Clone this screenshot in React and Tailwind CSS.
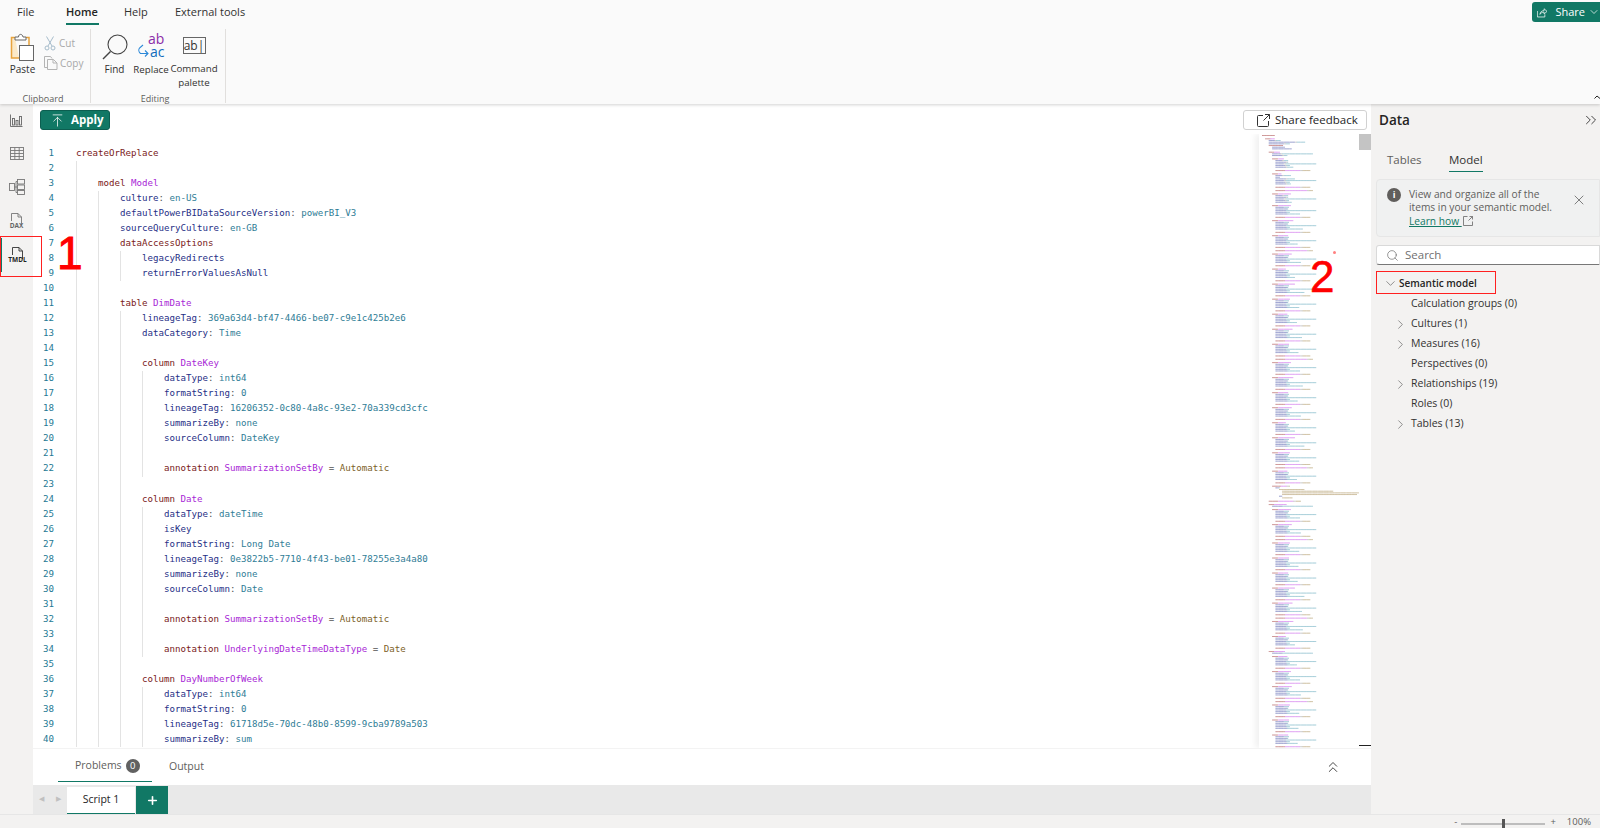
import React from "react";
import { ChevronRight, ChevronDown, ChevronsRight, ChevronsUp, X, Search, ArrowUpToLine, Plus } from "lucide-react";

const K = "text-[#7a1a1a]", N = "text-[#a81fd6]", P = "text-[#1f2f86]", V = "text-[#2f7d96]", G = "text-[#555555]", A = "text-[#7d5f28]";

const prop = (i, k, v) => [i, [[k, P], [": ", G], [v, V]]];
const kw = (i, k, n) => [i, [[k + " ", K], [n, N]]];
const ann = (i, n, v) => [i, [["annotation ", K], [n, N], [" = ", G], [v, A]]];
const blank = [0, []];

const CODE = [
  [0, [["createOrReplace", K]]],
  blank,
  kw(4, "model", "Model"),
  prop(8, "culture", "en-US"),
  prop(8, "defaultPowerBIDataSourceVersion", "powerBI_V3"),
  prop(8, "sourceQueryCulture", "en-GB"),
  [8, [["dataAccessOptions", K]]],
  [12, [["legacyRedirects", P]]],
  [12, [["returnErrorValuesAsNull", P]]],
  blank,
  kw(8, "table", "DimDate"),
  prop(12, "lineageTag", "369a63d4-bf47-4466-be07-c9e1c425b2e6"),
  prop(12, "dataCategory", "Time"),
  blank,
  kw(12, "column", "DateKey"),
  prop(16, "dataType", "int64"),
  prop(16, "formatString", "0"),
  prop(16, "lineageTag", "16206352-0c80-4a8c-93e2-70a339cd3cfc"),
  prop(16, "summarizeBy", "none"),
  prop(16, "sourceColumn", "DateKey"),
  blank,
  ann(16, "SummarizationSetBy", "Automatic"),
  blank,
  kw(12, "column", "Date"),
  prop(16, "dataType", "dateTime"),
  [16, [["isKey", P]]],
  prop(16, "formatString", "Long Date"),
  prop(16, "lineageTag", "0e3822b5-7710-4f43-be01-78255e3a4a80"),
  prop(16, "summarizeBy", "none"),
  prop(16, "sourceColumn", "Date"),
  blank,
  ann(16, "SummarizationSetBy", "Automatic"),
  blank,
  ann(16, "UnderlyingDateTimeDataType", "Date"),
  blank,
  kw(12, "column", "DayNumberOfWeek"),
  prop(16, "dataType", "int64"),
  prop(16, "formatString", "0"),
  prop(16, "lineageTag", "61718d5e-70dc-48b0-8599-9cba9789a503"),
  prop(16, "summarizeBy", "sum"),
];

const guideCount = (i) => {
  let j = i;
  while (j < CODE.length && CODE[j][1].length === 0) j++;
  const ind = j < CODE.length ? CODE[j][0] : 16;
  return Math.floor(ind / 4);
};
const GUIDE_X = ["left-[0px]", "left-[22px]", "left-[44px]", "left-[66px]"];

const MINI = { K: "#a33a3a", N: "#c550e8", P: "#4a55a8", V: "#58a3b8", G: "#999999", A: "#a58a50" };
const miniRows = () => {
  const rows = [];
  const push = (ind, toks) => rows.push([ind, toks]);
  const col = (n, extra) => {
    push(12, [[7, MINI.K], [n, MINI.N]]);
    push(16, [[10, MINI.P], [6, MINI.V]]);
    push(16, [[14, MINI.P], [1, MINI.V]]);
    push(16, [[12, MINI.P], [36, MINI.V]]);
    push(16, [[13, MINI.P], [4, MINI.V]]);
    push(16, [[14, MINI.P], [n, MINI.V]]);
    push(0, []);
    push(16, [[11, MINI.K], [18, MINI.N], [3, MINI.G], [9, MINI.A]]);
    if (extra) {
      push(0, []);
      push(16, [[11, MINI.K], [26, MINI.N], [3, MINI.G], [4, MINI.A]]);
    }
    push(0, []);
  };
  const table = (n) => {
    push(8, [[6, MINI.K], [n, MINI.N]]);
    push(12, [[12, MINI.P], [36, MINI.V]]);
    push(0, []);
  };
  CODE.forEach(([ind, toks]) => rows.push([ind, toks.map(([t, c]) => [t.length, c === K ? MINI.K : c === N ? MINI.N : c === P ? MINI.P : c === A ? MINI.A : c === G ? MINI.G : MINI.V])]));
  push(16, [[14, MINI.P], [5, MINI.V]]);
  push(0, []);
  const names = [15, 18, 12, 16, 9, 20, 14, 11, 17, 13];
  for (let i = 0; rows.length < 205; i++) col(names[i % names.length], i % 7 === 2);
  push(12, [[10, MINI.K], [7, MINI.N], [3, MINI.G], [1, MINI.A]]);
  push(16, [[4, MINI.P], [1, MINI.V]]);
  push(20, [[30, MINI.A]]);
  push(24, [[60, MINI.A]]);
  push(24, [[90, MINI.A]]);
  push(24, [[88, MINI.A]]);
  push(20, [[4, MINI.P]]);
  push(24, [[12, MINI.A]]);
  push(0, []);
  push(8, [[11, MINI.K], [18, MINI.N], [3, MINI.G], [6, MINI.A]]);
  push(0, []);
  for (let i = 0; rows.length < 372; i++) {
    if (i % 9 === 0) table(names[i % names.length]);
    col(names[(i * 3) % names.length], i % 5 === 1);
  }
  return rows;
};

function Minimap() {
  const rows = miniRows();
  const lines = [];
  rows.forEach(([ind, toks], r) => {
    let x = 3 + ind * 0.85;
    toks.forEach(([len, c], i) => {
      const y = 1.5 + r * 1.67;
      lines.push(
        <line key={r + "-" + i} x1={x} x2={x + len * 0.85} y1={y} y2={y} stroke={c} strokeWidth={1} strokeDasharray="0.62 0.23" opacity={0.78} />
      );
      x += len * 0.85;
    });
  });
  return (
    <svg width="100" height="614" viewBox="0 0 100 614" className="block">
      {lines}
    </svg>
  );
}

const F = { fontFamily: '"Open Sans", "Noto Sans", sans-serif' };
const IconPaste = () => (
  <svg width="25" height="29" viewBox="0 0 25 29" fill="none">
    <path d="M5 4.500H1.500V25H9" stroke="#e8a33d" strokeWidth="1.500" fill="#fbe9c8" />
    <path d="M16 4.500h3v8" stroke="#e8a33d" strokeWidth="1.500" />
    <path d="M5 7V4h3.500c0-3.500 4-3.500 4.500 0H16v3z" fill="#fff" stroke="#666" strokeWidth="1" />
    <rect x="9.500" y="12.500" width="14" height="15" fill="#fff" stroke="#666" strokeWidth="1" />
  </svg>
);
const IconCut = () => (
  <svg width="12" height="15" viewBox="0 0 12 15" fill="none" stroke="#a6bccb" strokeWidth="1">
    <path d="M2.500 0.500 8 10M9.500 0.500 4 10" />
    <circle cx="3" cy="12" r="2" />
    <circle cx="9" cy="12" r="2" />
  </svg>
);
const IconCopy = () => (
  <svg width="14" height="14" viewBox="0 0 14 14" fill="none" stroke="#b4b4b4" strokeWidth="1">
    <path d="M3.500 11.500H.5V.5h6l1.500 2" />
    <path d="M3.500 3.500h6l3.500 3.500v6.500h-9.500zM9 3.500V7h4" fill="#fafafa" />
  </svg>
);
const IconFind = () => (
  <svg width="26" height="26" viewBox="0 0 26 26" fill="none" stroke="#444" strokeWidth="1.100">
    <circle cx="15.500" cy="10.500" r="9.500" />
    <path d="M8.500 17.500 1 25" strokeWidth="1.400" />
  </svg>
);
const IconReplaceArrow = () => (
  <svg width="11" height="16" viewBox="0 0 11 16" fill="none" stroke="#2b88d8" strokeWidth="1.100">
    <path d="M5 1 1.500 4C.5 5.500.5 8 2.500 9.500L10 9.500M7 6.500l3 3-3 3" />
  </svg>
);

const RailIconReport = () => (
  <svg width="13" height="13" viewBox="0 0 13 13" fill="none" stroke="#666" strokeWidth="0.900">
    <path d="M.5.5v12h12" />
    <rect x="2.500" y="4.500" width="2" height="6.500" />
    <rect x="6" y="6.500" width="2" height="4.500" />
    <rect x="9.500" y="2.500" width="2" height="8.500" />
  </svg>
);
const RailIconTable = () => (
  <svg width="14" height="13" viewBox="0 0 14 13" fill="none" stroke="#777" strokeWidth="0.900">
    <rect x=".5" y=".5" width="13" height="12" />
    <path d="M.5 3.500h13M.5 6.500h13M.5 9.500h13M4.800 .5v12M9.200 .5v12" />
  </svg>
);
const RailIconModel = () => (
  <svg width="16" height="16" viewBox="0 0 16 16" fill="none" stroke="#777" strokeWidth="0.900">
    <rect x="8.500" y=".5" width="7" height="4.500" />
    <rect x="8.500" y="6" width="7" height="4.500" />
    <rect x="8.500" y="11.500" width="7" height="4" />
    <rect x=".5" y="4.500" width="5" height="7" />
    <path d="M5.500 8h3M7 2.500V13.500M7 2.500h1.500M7 13.500h1.500" />
  </svg>
);

const DocGlyph = ({ label, active }) => (
  <div className="relative w-[24px] h-[17px] flex flex-col items-center">
    <svg width="11" height="13" viewBox="0 0 11 13" fill="none" stroke={active ? "#333" : "#777"} strokeWidth="0.900">
      <path d="M.5 8V.5h6.500L10.500 4v8M7 .5V4h3.500" />
    </svg>
    <span className={`absolute top-[9px] text-[6.500px] leading-[7px] font-bold ${active ? "text-[#222]" : "text-[#666]"}`}>{label}</span>
  </div>
);

const TreeRow = ({ children, exp }) => (
  <div className="h-[20px] flex items-center pl-[20px] text-[10.500px] text-[#323130]">
    <span className="w-[15px] flex items-center">{exp && <ChevronRight size={15} strokeWidth={0.9} className="text-[#444] -ml-[3px]" />}</span>
    <span>{children}</span>
  </div>
);

export default function App() {
  return (
    <div className="relative w-[1600px] h-[828px] overflow-hidden flex flex-col bg-white" style={F}>
      {/* Ribbon */}
      <header className="relative z-10 h-[104px] bg-[#fafafa] shadow-[0_1px_3px_rgba(0,0,0,0.18)] shrink-0">
        <nav className="h-[29px] flex pl-[17px] text-[11px] text-[#323130]">
          <div className="w-[49px] pt-[4px]">File</div>
          <div className="w-[58px] pt-[4px] font-semibold text-[#252423]">
            <div className="w-[33px] h-[21px] border-b-2 border-[#117865]">Home</div>
          </div>
          <div className="w-[51px] pt-[4px]">Help</div>
          <div className="pt-[4px]">External tools</div>
        </nav>
        <div className="flex h-[74px] text-[#323130] text-[10px]">
          <section className="w-[91px] border-r border-[#e1dfdd] flex flex-col">
            <div className="flex-1 flex">
              <div className="w-[44px] pl-[1px] flex flex-col items-center pt-[4px]">
                <IconPaste />
                <div className="leading-[14px]">Paste</div>
              </div>
              <div className="pt-[4px] text-[#a8a8a8]">
                <div className="flex h-[20px] items-center gap-[3px]"><IconCut /><span>Cut</span></div>
                <div className="flex h-[20px] items-center gap-[2px]"><IconCopy /><span>Copy</span></div>
              </div>
            </div>
            <div className="text-center text-[9px] text-[#605e5c] h-[12px] leading-[12px] -mb-[2px] pr-[4px]">Clipboard</div>
          </section>
          <section className="w-[135px] border-r border-[#e1dfdd] flex flex-col">
            <div className="flex-1 flex">
              <div className="w-[37px] ml-[5px] flex flex-col items-center pt-[5px]">
                <IconFind />
                <div className="leading-[14px] mt-[2px]">Find</div>
              </div>
              <div className="w-[36px] flex flex-col items-center pt-[4px]">
                <div className="relative h-[29px] w-[30px]">
                  <span className="absolute left-[12px] top-[0px] text-[14px] leading-[12px] text-[#8a2da8]">ab</span>
                  <span className="absolute left-[14px] top-[13px] text-[14px] leading-[12px] text-[#0f6cbd]">ac</span>
                  <span className="absolute left-[2px] top-[11px]"><IconReplaceArrow /></span>
                </div>
                <div className="leading-[14px] mt-[1px] whitespace-nowrap text-[9.700px]">Replace</div>
              </div>
              <div className="w-[50px] flex flex-col items-center pt-[8px]">
                <div className="w-[23px] h-[17px] border border-[#666] flex items-center justify-center text-[12px] text-[#333] leading-none">ab|</div>
                <div className="leading-[14px] mt-[8px] text-center whitespace-nowrap text-[9.700px]">Command<br />palette</div>
              </div>
            </div>
            <div className="text-center text-[9px] text-[#605e5c] h-[12px] leading-[12px] -mb-[2px] pr-[6px]">Editing</div>
          </section>
        </div>
        <button className="absolute right-0 top-[2px] w-[68px] h-[20px] bg-[#117865] rounded-l-[3px] flex items-center pl-[5px] text-white text-[11px]">
          <svg width="14" height="13" viewBox="0 0 14 13" fill="none" stroke="#fff" strokeWidth="1">
            <path d="M.5 4.500v8h10V9" />
            <path d="M4 9c0-3 2.500-5 5.500-5V1.500L13.500 5l-4 3.500V6C7 6 5 7 4 9z" />
          </svg>
          <span className="ml-[8px]">Share</span>
          <ChevronDown size={12} strokeWidth={1.4} className="ml-[3px] shrink-0" />
        </button>
        <svg width="6" height="4" viewBox="0 0 6 4" fill="none" stroke="#222" strokeWidth="1" className="absolute right-0 top-[95px]"><path d="M.5 3.500 3 1l3 2.500" /></svg>
      </header>

      {/* Main */}
      <div className="flex-1 flex min-h-0">
        <aside className="w-[33px] bg-[#f3f2f1] flex flex-col items-center shrink-0 pt-[9px]">
          <div className="h-[14px] flex items-center mb-[19px]"><RailIconReport /></div>
          <div className="h-[14px] flex items-center mb-[19px]"><RailIconTable /></div>
          <div className="h-[16px] flex items-center mb-[18px]"><RailIconModel /></div>
          <div className="h-[17px] flex items-center mb-[17px]"><DocGlyph label="DAX" /></div>
          <div className="h-[34px] w-full flex items-center justify-center border-l-2 border-[#117865] bg-[#f3f2f1] -mt-[9px]"><DocGlyph label="TMDL" active /></div>
        </aside>

        <main className="w-[1338px] flex flex-col min-w-0">
          <div className="h-[30px] bg-white flex items-center justify-between pl-[7px] pr-[4px] pt-[2px] shrink-0">
            <button className="w-[70px] h-[20px] rounded-[3px] bg-[#117865] text-white text-[11.500px] font-bold flex items-center pl-[9px] gap-[6px] border border-[#0c5e50]">
              <ArrowUpToLine size={15} strokeWidth={1.2} />
              Apply
            </button>
            <button className="w-[124px] h-[20px] rounded-[3px] bg-white border border-[#d1d1d1] text-[11.500px] text-[#242424] flex items-center pl-[13px] gap-[5px]">
              <svg width="13" height="13" viewBox="0 0 13 13" fill="none" stroke="#333" strokeWidth="1">
                <path d="M6 1.500H1.500a1 1 0 0 0-1 1v9a1 1 0 0 0 1 1h9a1 1 0 0 0 1-1V7M8 .5h4.500V5M12.500 .5 6.500 6.500" />
              </svg>
              Share feedback
            </button>
          </div>

          <div className="relative flex-1 min-h-0 flex overflow-hidden bg-white">
            <div className="flex-1 pt-[11.500px] overflow-hidden" style={{ fontFamily: '"DejaVu Sans Mono", "Liberation Mono", monospace' }}>
              {CODE.map(([ind, toks], i) => (
                <div key={i} className="h-[15.060px] flex text-[9.150px] leading-[15.060px] whitespace-pre">
                  <div className="w-[43px] pr-[22px] text-right text-[#237893] shrink-0">{i + 1}</div>
                  <div className="relative flex-1">
                    {Array.from({ length: guideCount(i) }).map((_, g) => (
                      <span key={g} className={`absolute top-0 bottom-0 w-px bg-[#e3e3e3] ${GUIDE_X[g]}`} />
                    ))}
                    <span style={{ paddingLeft: ind * 5.5 }}>
                      {toks.map(([t, c], j) => <span key={j} className={c}>{t}</span>)}
                    </span>
                  </div>
                </div>
              ))}
            </div>
            <div className="w-[100px] shrink-0 bg-white shadow-[-4px_0_6px_rgba(0,0,0,0.06)] overflow-hidden">
              <Minimap />
            </div>
            <div className="w-[12px] shrink-0 bg-white relative">
              <div className="h-[16px] bg-[#c4c4c4]" />
              <div className="absolute left-0 right-0 bottom-[2px] h-px bg-[#222]" />
            </div>
          </div>

          <div className="h-[37px] shrink-0 bg-white border-t border-[#f3f3f3] flex items-start relative">
            <div className="ml-[25px] w-[94px] h-[33px] border-b border-[#117865] flex items-center pl-[17px] text-[10.500px] text-[#605e5c] pt-[2px]">
              Problems
              <span className="ml-[4px] w-[14px] h-[14px] rounded-full bg-[#616161] text-white text-[9.500px] flex items-center justify-center">0</span>
            </div>
            <div className="ml-[17px] h-[33px] flex items-center text-[10.500px] text-[#605e5c] pt-[2px]">Output</div>
            <ChevronsUp size={18} strokeWidth={1.1} className="absolute left-[1291px] top-[9px] text-[#222]" />
          </div>

          <div className="h-[29px] shrink-0 bg-[#e9e9e9] flex items-end">
            <div className="w-[33px] h-full flex items-center justify-center gap-[12px] text-[#c0c0c0] text-[7px]">
              <span>◀</span><span>▶</span>
            </div>
            <div className="w-[68px] h-[27px] bg-white border-b border-[#117865] flex items-center justify-center text-[10.500px] text-[#242424] ml-[1px]">Script 1</div>
            <div className="w-[32px] h-[28px] bg-[#117865] flex items-center justify-center ml-[1px]">
              <Plus size={13} strokeWidth={3} className="text-white" />
            </div>
          </div>
        </main>

        <aside className="flex-1 bg-[#f3f2f1] min-w-0 pl-[5px]">
          <div className="h-[32px] flex items-center justify-between pl-[3px]">
            <span className="text-[13.500px] font-semibold text-[#252423]">Data</span>
            <ChevronsRight size={18} strokeWidth={1.1} className="text-[#222]" />
          </div>
          <div className="h-[36px] flex pl-[11px] text-[11.500px] text-[#323130] pt-[15px]">
            <span className="w-[62px] text-[#605e5c]">Tables</span>
            <span className="h-[21px] border-b border-[#117865]">Model</span>
          </div>
          <div className="mt-[7px] h-[58px] bg-[#f0f1f1] border border-[#e6e6e6] rounded-l-[4px] relative pl-[32px] pt-[8px] text-[10.200px] leading-[13.300px] text-[#605e5c]">
            <span className="absolute left-[10px] top-[8px] w-[14px] h-[14px] rounded-full bg-[#605e5c] text-white text-[9px] font-bold flex items-center justify-center">i</span>
            <div className="w-[158px]">
              View and organize all of the items in your semantic model. <span className="text-[#117865] underline">Learn how </span>
              <svg width="10" height="10" viewBox="0 0 10 10" fill="none" stroke="#666" strokeWidth="0.8" className="inline ml-[1px] align-[-1px]"><path d="M4.500.5H.5v9h9V5.500M6.500.5h3v3M9.500.5l-4 4" /></svg>
            </div>
            <X size={16} strokeWidth={1} className="absolute left-[194px] top-[12px] text-[#444]" />
          </div>
          <div className="mt-[8px] h-[20px] bg-white rounded-l-[3px] border border-[#d9d9d9] border-b-[#777] flex items-center pl-[9px] gap-[6px] text-[11.500px] text-[#707070]">
            <Search size={13} strokeWidth={1.1} className="text-[#555]" />
            Search
          </div>
          <div className="mt-[7px] h-[22px] flex items-center pl-[7px] text-[10px] font-semibold text-[#252423]">
            <ChevronDown size={15} strokeWidth={0.9} className="text-[#444] mr-[1px]" />
            Semantic model
          </div>
          <div>
            <TreeRow>Calculation groups (0)</TreeRow>
            <TreeRow exp>Cultures (1)</TreeRow>
            <TreeRow exp>Measures (16)</TreeRow>
            <TreeRow>Perspectives (0)</TreeRow>
            <TreeRow exp>Relationships (19)</TreeRow>
            <TreeRow>Roles (0)</TreeRow>
            <TreeRow exp>Tables (13)</TreeRow>
          </div>
        </aside>
      </div>

      {/* Status bar */}
      <footer className="h-[14px] shrink-0 bg-[#f3f2f1] border-t border-[#e6e6e6] flex items-start justify-end pr-[9px] pt-[1px] text-[9.500px] leading-[12px] text-[#605e5c] overflow-hidden">
        <span className="mr-[4px]">-</span>
        <div className="relative w-[84px] h-[2px] bg-[#bdbdbd] mr-[5px] mt-[7px]">
          <span className="absolute left-[41px] top-[-4px] w-[3px] h-[9px] bg-[#555]" />
        </div>
        <span className="mr-[11px]">+</span>
        <span>100%</span>
      </footer>

      {/* Annotations over the screenshot */}
      <div className="absolute left-0 top-[236px] w-[42px] h-[41px] border border-[#ff2020] pointer-events-none" />
      <div className="absolute left-[1376px] top-[271px] w-[120px] h-[23px] border border-[#ff2020] pointer-events-none" />
      <div className="absolute left-[57px] top-[227px] text-[46px] leading-[52px] text-[#ff0000] [-webkit-text-stroke:1px_#ff0000] pointer-events-none" style={{ fontFamily: '"Liberation Sans", sans-serif' }}>1</div>
      <div className="absolute left-[1310px] top-[252px] text-[44px] leading-[50px] text-[#ff0000] [-webkit-text-stroke:0.6px_#ff0000] pointer-events-none" style={{ fontFamily: '"Liberation Sans", sans-serif' }}>2</div>
      <div className="absolute left-[1333px] top-[251px] w-[3px] h-[3px] rounded-full bg-[#ff8080] pointer-events-none" />
    </div>
  );
}
